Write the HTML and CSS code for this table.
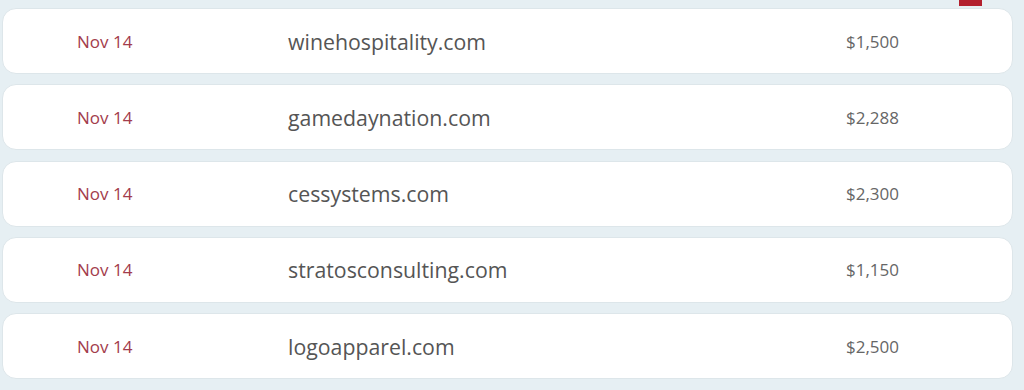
FILE: index.html
```html
<!DOCTYPE html>
<html>
<head>
<meta charset="utf-8">
<link rel="stylesheet" href="styles.css">
</head>
<body>
<div class="marker"></div>
<div class="list">
  <div class="row"><span class="date">Nov 14</span><span class="domain">winehospitality.com</span><span class="price">$1,500</span></div>
  <div class="row"><span class="date">Nov 14</span><span class="domain">gamedaynation.com</span><span class="price">$2,288</span></div>
  <div class="row"><span class="date">Nov 14</span><span class="domain">cessystems.com</span><span class="price">$2,300</span></div>
  <div class="row"><span class="date">Nov 14</span><span class="domain">stratosconsulting.com</span><span class="price">$1,150</span></div>
  <div class="row"><span class="date">Nov 14</span><span class="domain">logoapparel.com</span><span class="price">$2,500</span></div>
</div>
</body>
</html>
```
FILE: styles.css
```css
html, body {
  margin: 0;
  padding: 0;
  background: #e6eff3;
  font-family: "Open Sans", "Liberation Sans", sans-serif;
}
body {
  position: relative;
  width: 1024px;
  height: 390px;
  overflow: hidden;
}
.marker {
  position: absolute;
  left: 959px;
  top: 0;
  width: 23px;
  height: 6px;
  background: #b3202e;
}
.list {
  display: flex;
  flex-direction: column;
  gap: 10.3px;
  padding: 8px 11px 0 2px;
}
.row {
  height: 66px;
  box-sizing: border-box;
  background: #fff;
  border: 1px solid #dde6ea;
  border-radius: 14px;
  display: flex;
  align-items: center;
}
.date {
  width: 211px;
  padding-left: 74px;
  box-sizing: content-box;
  color: #a33c4c;
  font-size: 17px;
}
.domain {
  width: 558px;
  color: #555;
  font-size: 21.3px;
}
.price {
  color: #666;
  font-size: 17px;
}
```
